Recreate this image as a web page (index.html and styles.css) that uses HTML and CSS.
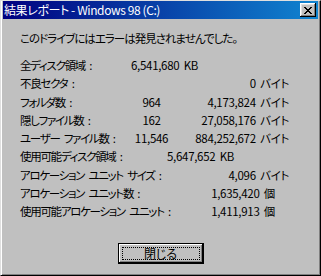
FILE: index.html
```html
<!DOCTYPE html>
<html lang="ja">
<head>
    <meta charset="UTF-8">
    <title>結果レポート - Windows 98 (C:)</title>
    <link rel="stylesheet" href="styles.css">
</head>
<body>

    <div class="window">
        <div class="title-bar">
            <span class="title-text">結果レポート - Windows 98 (C:)</span>
            <button class="close-btn" aria-label="閉じる">
                <svg width="8" height="7" viewBox="0 0 8 7">
                    <path d="M0 0h2v1h1v1h2v-1h1v-1h2v1h-1v1h-1v1h-1v1h1v1h1v1h1v1h-2v-1h-1v-1h-2v1h-1v1h-2v-1h1v-1h1v-1h1v-1h-1v-1h-1v-1h-1z" fill="#000"/>
                </svg>
            </button>
        </div>

        <div class="content">
            <p class="message">このドライブにはエラーは発見されませんでした。</p>

            <!-- 結果一覧 -->
            <div class="report">
                <span class="label">全ディスク領域 :</span>
                <span class="value wide">6,541,680 KB</span>

                <span class="label">不良セクタ :</span>
                <span></span>
                <span class="value bytes">0 バイト</span>

                <span class="label">フォルダ数 :</span>
                <span class="value count">964</span>
                <span class="value bytes">4,173,824 バイト</span>

                <span class="label">隠しファイル数 :</span>
                <span class="value count">162</span>
                <span class="value bytes">27,058,176 バイト</span>

                <span class="label">ユーザー ファイル数 :</span>
                <span class="value count">11,546</span>
                <span class="value bytes">884,252,672 バイト</span>

                <span class="label">使用可能ディスク領域 :</span>
                <span class="value wide free">5,647,652 KB</span>

                <span class="label">アロケーション ユニット サイズ :</span>
                <span></span>
                <span class="value bytes">4,096 バイト</span>

                <span class="label">アロケーション ユニット数 :</span>
                <span></span>
                <span class="value units">1,635,420 個</span>

                <span class="label">使用可能アロケーション ユニット :</span>
                <span></span>
                <span class="value units">1,411,913 個</span>
            </div>

            <div class="actions">
                <button class="btn-close"><span class="focus">閉じる</span></button>
            </div>
        </div>
    </div>

</body>
</html>
```

FILE: styles.css
```css
body {
    margin: 0;
    background-color: #c0c0c0;
    font-family: "MS UI Gothic", "Noto Sans CJK JP", sans-serif;
    font-size: 11.5px;
    font-feature-settings: "palt";
    color: #000;
}
.window {
    width: 321px;
    height: 276px;
    box-sizing: border-box;
    background-color: #c0c0c0;
    border: 1px solid;
    border-color: #dfdfdf #000 #000 #dfdfdf;
    box-shadow: inset 1px 0 0 #fff, inset -1px -1px 0 #808080;
    padding: 0 2px 2px;
    display: flex;
    flex-direction: column;
}
.title-bar {
    height: 18px;
    display: flex;
    align-items: center;
    justify-content: space-between;
    padding: 0 2px 0 1px;
    background: linear-gradient(90deg, #000080, #1084d0);
    color: #fff;
}
.title-text {
    font-size: 12px;
    line-height: 18px;
    letter-spacing: -0.4px;
}
.close-btn {
    width: 16px;
    height: 14px;
    padding: 0;
    border: none;
    background-color: #c0c0c0;
    box-shadow: inset -1px -1px 0 #000, inset 1px 1px 0 #fff, inset -2px -2px 0 #808080, inset 2px 2px 0 #dfdfdf;
    display: flex;
    align-items: center;
    justify-content: center;
}
.close-btn svg {
    display: block;
    margin-left: -1px;
}
.content {
    flex: 1;
    padding: 10px 29px 0 17px;
}
.message {
    margin: 0;
    line-height: 18px;
    letter-spacing: -1px;
}
.report {
    margin-top: 9px;
    display: grid;
    grid-template-columns: 111px 41px 1fr;
    grid-auto-rows: 18.25px;
    align-items: center;
    white-space: nowrap;
}
.label {
    letter-spacing: -1.3px;
    word-spacing: 3px;
}
.value {
    letter-spacing: -0.3px;
    word-spacing: 2px;
}
.wide {
    grid-column: 2 / 4;
}
.free {
    padding-left: 36px;
}
.count {
    text-align: center;
}
.bytes {
    grid-column: 3;
    text-align: right;
}
.units {
    grid-column: 3;
    text-align: right;
    padding-right: 14px;
}
.actions {
    display: flex;
    justify-content: center;
    margin-top: 23px;
    padding-left: 12px;
}
.btn-close {
    width: 86px;
    height: 21px;
    padding: 3px;
    border: 1px solid #000;
    background-color: #c0c0c0;
    box-shadow: inset -1px -1px 0 #000, inset 1px 1px 0 #fff, inset -2px -2px 0 #808080;
    font-family: inherit;
    font-size: 12px;
    font-feature-settings: "palt";
    color: #000;
}
.focus {
    display: block;
    height: 100%;
    box-sizing: border-box;
    border: 1px dotted #000;
    line-height: 11px;
}
```
